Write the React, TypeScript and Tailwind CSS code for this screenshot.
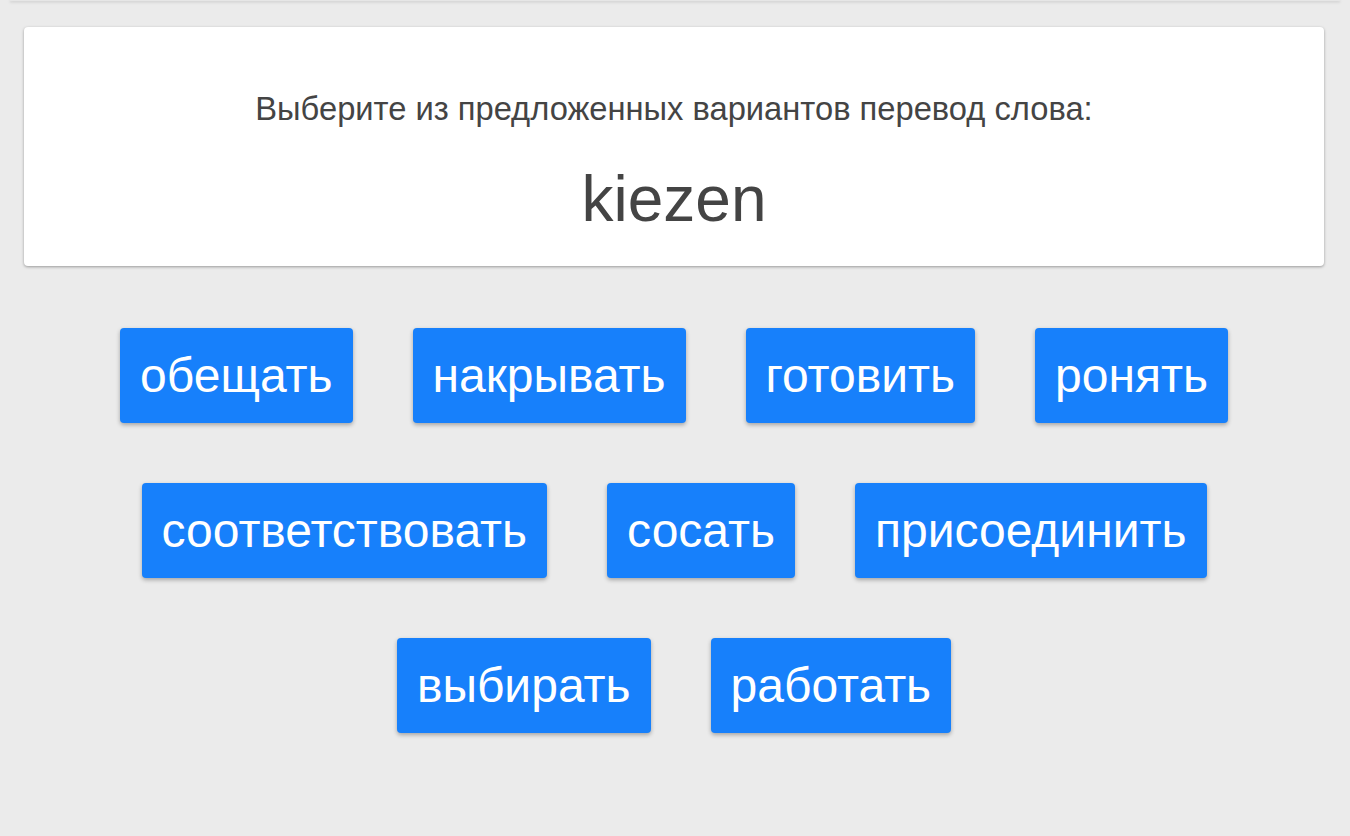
import React from "react";

const rows = [
  ["обещать", "накрывать", "готовить", "ронять"],
  ["соответствовать", "сосать", "присоединить"],
  ["выбирать", "работать"],
];

export default function App() {
  return (
    <div
      className="min-h-[836px] bg-[#ebebeb] overflow-hidden"
      style={{ fontFamily: '"Liberation Sans", Arial, sans-serif' }}
    >
      <div className="mx-[10px] h-px bg-[#e6e6e6] shadow-[0_1px_3px_rgba(0,0,0,0.25)]" />
      <div className="ml-[24px] mr-[26px]">
        <div className="mt-[26px] h-[239px] rounded-[4px] bg-white shadow-[0_1px_3px_rgba(0,0,0,0.35)] flex flex-col items-center text-[#444444]">
          <div className="mt-[63px] text-[32.7px] leading-[38px] whitespace-nowrap">
            Выберите из предложенных вариантов перевод слова:
          </div>
          <div className="mt-[35px] text-[64px] leading-[72px]">kiezen</div>
        </div>
        <div className="mt-[32px] flex flex-col items-center">
          {rows.map((row, i) => (
            <div key={i} className="flex justify-center">
              {row.map((w) => (
                <button
                  key={w}
                  className="m-[30px] h-[95px] px-[20px] rounded-[4px] bg-[#1780fb] text-white text-[48px] leading-[56px] shadow-[0_2px_4px_rgba(0,0,0,0.3)]"
                >
                  {w}
                </button>
              ))}
            </div>
          ))}
        </div>
      </div>
    </div>
  );
}
